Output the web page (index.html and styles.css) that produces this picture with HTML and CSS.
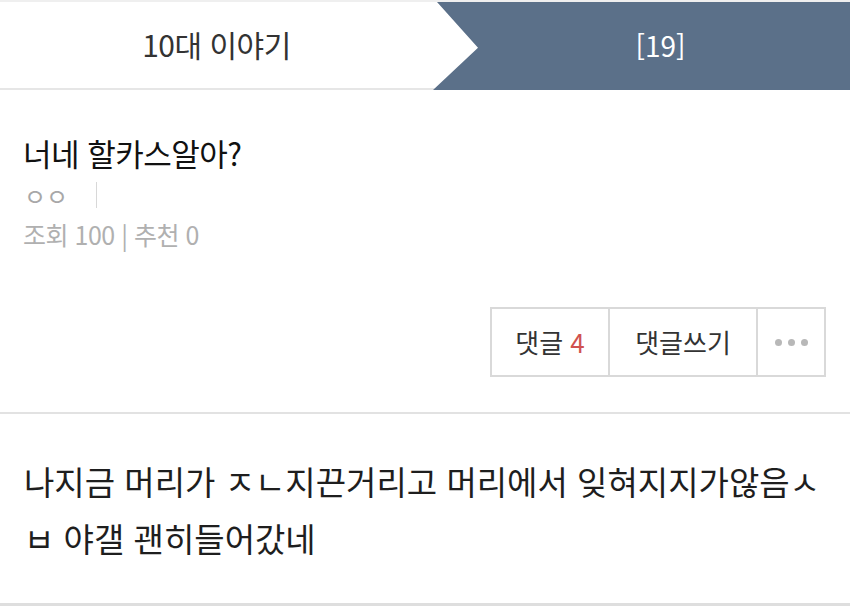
FILE: index.html
```html
<!DOCTYPE html>
<html lang="ko">
<head>
<meta charset="utf-8">
<link rel="stylesheet" href="styles.css">
</head>
<body>
<div class="page">
  <header class="board-head">
    <div class="tab-left">10대 이야기</div>
    <div class="tab-right"><span>[19]</span></div>
  </header>
  <section class="post">
    <h1 class="title">너네 할카스알아?</h1>
    <div class="author"><span class="nick">ㅇㅇ</span><span class="bar"></span><span class="ip"></span></div>
    <div class="stats">조회 100 | 추천 0</div>
    <div class="actions">
      <div class="btns">
        <div class="btn btn-cmt">댓글 <em>4</em></div>
        <div class="btn btn-write">댓글쓰기</div>
        <div class="btn btn-more"><i></i><i></i><i></i></div>
      </div>
    </div>
  </section>
  <article class="content">
    <p>나지금 머리가 ㅈㄴ지끈거리고 머리에서 잊혀지지가않음ㅅㅂ 야갤 괜히들어갔네</p>
  </article>
</div>
</body>
</html>
```

FILE: styles.css
```css
html, body {
  margin: 0;
  padding: 0;
  background: #fff;
}
body {
  font-family: "Noto Sans CJK KR", "Noto Sans", sans-serif;
  color: #222;
}
.page {
  width: 850px;
  border-top: 2px solid #efefef;
}
.board-head {
  display: flex;
  height: 86px;
  border-bottom: 2px solid #e6e6e6;
}
.tab-left {
  width: 433px;
  display: flex;
  align-items: center;
  justify-content: center;
  font-size: 30px;
  color: #333;
  letter-spacing: -0.5px;
  padding-bottom: 2px;
  box-sizing: border-box;
}
.tab-right {
  flex: 1;
  background: #5b7089;
  clip-path: polygon(4px 0, 100% 0, 100% 100%, 0 100%, 45px 52%);
  display: flex;
  align-items: center;
  justify-content: center;
  padding-left: 38px;
  padding-bottom: 2px;
  color: #fff;
  font-size: 28px;
  margin-bottom: -2px;
}
.post {
  padding: 44px 24px 0 23px;
  border-bottom: 2px solid #e2e2e2;
}
.title {
  margin: 0;
  font-size: 31px;
  line-height: 38px;
  font-weight: 400;
  color: #111;
  letter-spacing: -0.5px;
}
.author {
  margin-top: 7px;
  height: 32px;
  display: flex;
  align-items: center;
  font-size: 24px;
  color: #a8a8a8;
  padding-left: 1px;
}
.author .bar {
  width: 1px;
  height: 26px;
  background: #d8d8d8;
  margin-left: 28px;
}
.stats {
  margin-top: 7px;
  font-size: 25px;
  line-height: 32px;
  color: #b0b0b0;
  letter-spacing: -0.5px;
}
.actions {
  display: flex;
  justify-content: flex-end;
  margin-top: 57px;
  padding-bottom: 35px;
}
.btns {
  display: flex;
  border: 2px solid #d9d9d9;
  height: 66px;
}
.btn {
  display: flex;
  align-items: center;
  justify-content: center;
  font-size: 26px;
  color: #333;
  padding-bottom: 2px;
  box-sizing: border-box;
}
.btn + .btn {
  border-left: 2px solid #d9d9d9;
}
.btn-cmt { width: 116px; }
.btn-cmt em {
  font-style: normal;
  color: #d0524f;
  margin-left: 7px;
}
.btn-write { width: 148px; }
.btn-more { width: 68px; gap: 6px; padding-bottom: 0; }
.btn-more i {
  display: block;
  width: 7px;
  height: 7px;
  border-radius: 50%;
  background: #b8b8b8;
}
.content {
  padding: 39px 24px 36px 24px;
  border-bottom: 3px solid #dedede;
}
.content p {
  margin: 0;
  font-size: 33px;
  line-height: 57px;
  color: #1e1e1e;
  letter-spacing: 0;
  word-break: break-all;
}
```
